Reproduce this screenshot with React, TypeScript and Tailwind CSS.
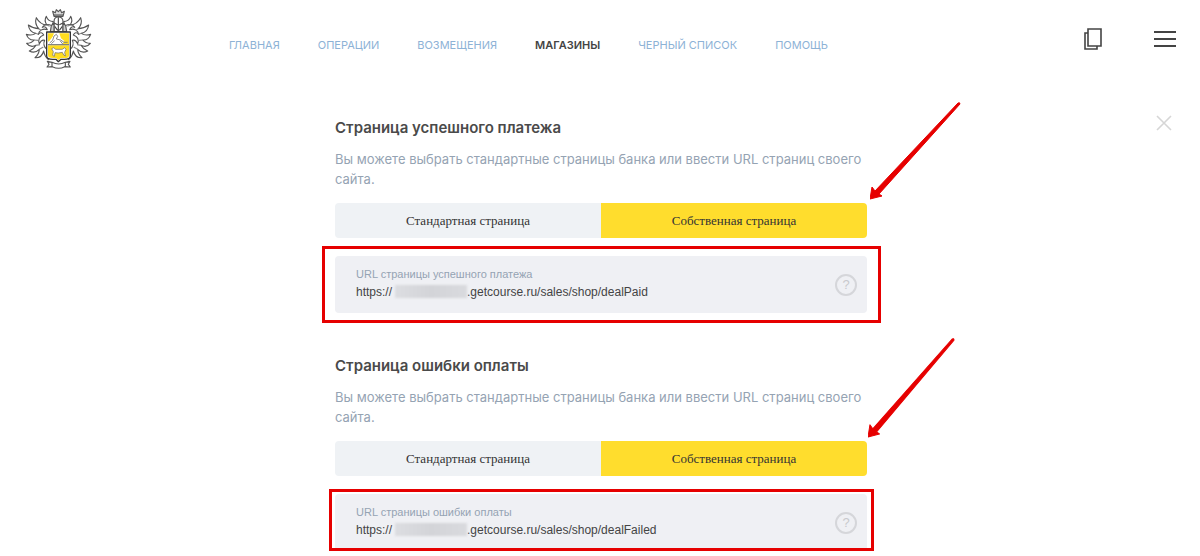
import { useState } from 'react'
import clsx from 'clsx'

interface PageSectionProps {
  id: string
  title: string
  label: string
  path: string
  frameClass: string
  arrowClass: string
}

const navItems = ['Главная', 'Операции', 'Возмещения', 'Магазины', 'Черный список', 'Помощь']

const sections: PageSectionProps[] = [
  {
    id: 'success',
    title: 'Страница успешного платежа',
    label: 'URL страницы успешного платежа',
    path: '.getcourse.ru/sales/shop/dealPaid',
    frameClass: '-top-[10px] -bottom-[10px] -left-[13px] -right-[14px]',
    arrowClass: 'ml-[3px] mb-[3px] w-[91px] h-[98px]',
  },
  {
    id: 'error',
    title: 'Страница ошибки оплаты',
    label: 'URL страницы ошибки оплаты',
    path: '.getcourse.ru/sales/shop/dealFailed',
    frameClass: '-top-[5px] bottom-0 -left-[6px] -right-[7px]',
    arrowClass: 'ml-[1px] mb-[3px] w-[87px] h-[100px]',
  },
]

function Mantling() {
  return (
    <g>
      <path
        d="M117 68C108 67 99 62 96 52C91 60 92 70 98 78C85 77 73 69 66 56C62 68 65 80 73 89C62 89 52 85 42 78C44 92 52 101 64 103C56 109 46 109 36 106C40 117 49 124 60 123C54 130 46 133 37 133C44 142 55 144 65 139C60 148 53 153 45 156C56 162 68 158 75 151C74 162 70 169 62 176C76 177 85 168 88 156C90 168 94 175 102 182L97 150C89 144 86 133 91 124C84 121 79 126 75 134C70 122 76 112 88 108C84 100 78 99 72 106C74 94 86 87 99 92C95 84 90 81 84 85C90 76 102 75 113 80Z"
        fill="#fff"
      />
      <path d="M98 78L106 82M73 89L80 94M64 103L72 106M60 123L71 124M65 139L77 137M75 151L87 144" stroke="#888" />
    </g>
  )
}

function Logo() {
  return (
    <svg viewBox="29 27 204 186" className="h-[62px] w-[68px]" fill="none" stroke="#555" strokeWidth="3.4" strokeLinejoin="round" role="img" aria-label="Герб">
      <Mantling />
      <g transform="matrix(-1 0 0 1 265 0)">
        <Mantling />
      </g>
      {/* crown */}
      <path d="M119 52L115 37L123 41L126 32L132 38L138 32L142 41L150 37L146 52Z" fill="#ddd" />
      <path d="M119 48H146" stroke="#444" strokeWidth="3" />
      {/* helmet */}
      <path d="M119 98V68C119 59 125 54 132 54C140 54 146 59 146 68V98Z" fill="#fff" />
      <path d="M132 55V96M119 72L130 77M146 72L135 77M121 82L130 94M144 82L135 94" stroke="#444" />
      <path d="M111 80L119 72V98H108ZM154 80L146 72V98H157Z" fill="#ccc" />
      {/* shield */}
      <path d="M97 99H168V171C168 179 160 181 150 181H140L132 188L125 181H115C105 181 97 179 97 171Z" fill="#fff" stroke="#333" strokeWidth="4" />
      <path d="M101 103H119L115 113L105 126L101 128ZM101 139H164V168C164 176 160 177 150 177H140L132 183L125 177H115C105 177 101 175 101 168ZM135 103H164V136H144L150 126L140 118Z" fill="#ffdd20" stroke="none" />
      <path d="M106 132L115 124L119 111L126 106L130 112L126 120L139 123L149 130H160M121 125L111 134M137 125L146 136" stroke="#777" strokeWidth="2.6" />
      <path d="M101 137H164" stroke="#777" />
      <path d="M112 149L118 146L124 151H144L151 146L155 151L151 160L153 171L148 168L144 160L132 162L122 161L120 172L115 169L117 158Z" fill="#fff" stroke="#666" strokeWidth="2" />
      {/* ribbon */}
      <path d="M99 187L113 190C125 196 141 196 153 190L167 187L162 196L168 204L151 203C140 209 126 209 114 203L98 204L104 196Z" fill="#fff" />
      <path d="M113 190V203M153 190V203" />
    </svg>
  )
}

function Arrow({ className }: { className: string }) {
  return (
    <svg
      viewBox="0 0 91 98"
      preserveAspectRatio="none"
      className={clsx('pointer-events-none absolute bottom-full left-full z-10', className)}
      fill="#e60000"
      aria-hidden="true"
    >
      <path d="M0 97L2 85L5 89L88 1Q90 0 90 2L9 92L12 94Z" stroke="#e60000" strokeWidth="1" strokeLinejoin="round" />
    </svg>
  )
}

function PageSection({ id, title, label, path, frameClass, arrowClass }: PageSectionProps) {
  const [custom, setCustom] = useState(true)
  const [value, setValue] = useState(path)

  return (
    <section>
      <h2 className="font-[Inter,sans-serif] text-[15px] leading-5 font-semibold text-[#4a4a4a]">{title}</h2>
      <p className="mt-[11px] font-[Inter,sans-serif] text-[13px] leading-5 text-[#95a3b3]">
        Вы можете выбрать стандартные страницы банка или ввести URL страниц своего сайта.
      </p>

      <div className="relative mt-[14px]">
        <div className="grid h-[35px] grid-cols-2 overflow-hidden rounded-[4px] font-['Liberation_Serif',serif] text-[13px] text-[#333]">
          <button type="button" onClick={() => setCustom(false)} className={custom ? 'bg-[#eff2f5]' : 'bg-[#ffdd2d]'}>
            Стандартная страница
          </button>
          <button type="button" onClick={() => setCustom(true)} className={custom ? 'bg-[#ffdd2d]' : 'bg-[#eff2f5]'}>
            Собственная страница
          </button>
        </div>
        <Arrow className={arrowClass} />
      </div>

      <div className="relative mt-[18px] flex h-[57px] items-center rounded-[4px] bg-[#eff0f4] pr-[10px] pl-[21px]">
        <div className="min-w-0 grow pb-1">
          <label htmlFor={id} className="block text-[11px] leading-4 text-[#95a3b3]">
            {label}
          </label>
          <div className="mt-[2px] flex h-4 items-center text-xs text-[#444]">
            <span>https://</span>
            {/* hidden account name */}
            <span className="ml-[3px] h-[13px] w-[72px] shrink-0 bg-linear-to-r from-[#dcdde1] via-[#d3d4d8] to-[#d9dade] blur-[1px]" />
            <input
              id={id}
              type="text"
              value={value}
              onChange={(e) => setValue(e.target.value)}
              className="min-w-0 grow bg-transparent outline-none"
            />
          </div>
        </div>
        <button
          type="button"
          aria-label="Подсказка"
          className="flex size-[22px] items-center justify-center rounded-full border-2 border-[#d5d6da] text-[13px] text-[#c8c9cd]"
        >
          ?
        </button>
        <div className={clsx('pointer-events-none absolute border-3 border-[#e60000]', frameClass)} />
      </div>
    </section>
  )
}

export default function App() {
  return (
    <div className="bg-white font-['Liberation_Sans',Arial,sans-serif]">
      <header className="flex h-[78px] items-center px-6">
        <a href="#" className="shrink-0">
          <Logo />
        </a>
        <nav className="mt-3 ml-[137px] flex gap-[38px] font-[Inter,sans-serif] text-[11px] leading-4 whitespace-nowrap text-[#8db2d6] uppercase">
          {navItems.map((item) => (
            <a key={item} href="#" className={clsx(item === 'Магазины' && 'font-semibold text-[#444]')}>
              {item}
            </a>
          ))}
        </nav>
        <div className="ml-auto flex items-center gap-[50px]">
          <button type="button" aria-label="Копировать">
            <svg viewBox="0 0 20 22" className="h-[22px] w-5" fill="none" stroke="#444" strokeWidth="1.6">
              <path d="M4 1H17V18H4ZM4 5H1V21H13V18" />
            </svg>
          </button>
          <button type="button" aria-label="Меню">
            <svg viewBox="0 0 22 18" className="h-[18px] w-[22px]" stroke="#444" strokeWidth="2">
              <path d="M0 2H22M0 9H22M0 16H22" />
            </svg>
          </button>
        </div>
      </header>

      <main className="grid grid-cols-[1fr_minmax(0,532px)_1fr] pt-10 pl-[2px]">
        <div className="col-start-2 flex flex-col gap-[43px]">
          {sections.map((section) => (
            <PageSection key={section.id} {...section} />
          ))}
        </div>
        <button type="button" aria-label="Закрыть" className="mt-[-3px] mr-7 size-4 justify-self-end">
          <svg viewBox="0 0 16 16" className="size-4" stroke="#d6d6d6" strokeWidth="1.6">
            <path d="M1 1L15 15M15 1L1 15" />
          </svg>
        </button>
      </main>
    </div>
  )
}
